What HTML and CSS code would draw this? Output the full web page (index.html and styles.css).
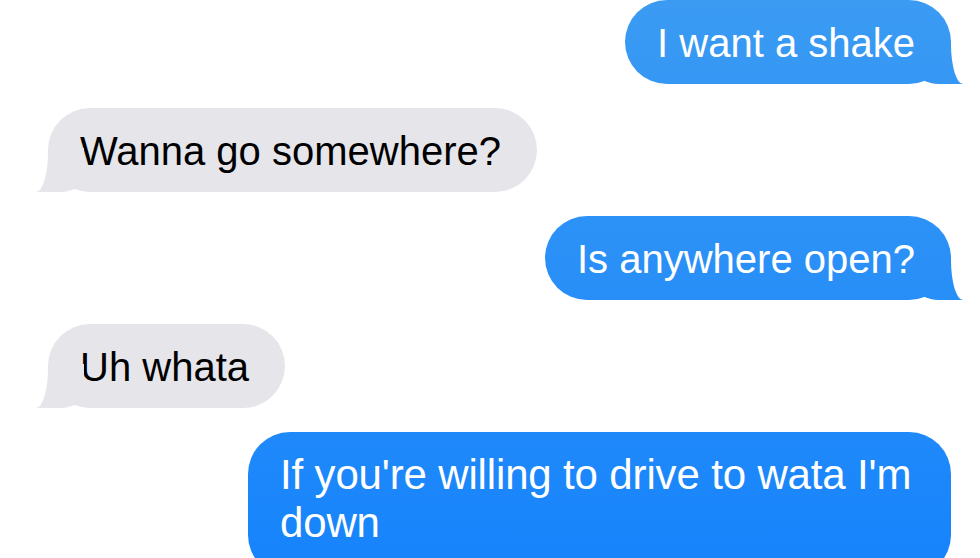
FILE: index.html
```html
<!DOCTYPE html>
<html lang="en">
<head>
  <meta charset="UTF-8">
  <meta name="viewport" content="width=device-width, initial-scale=1.0">
  <title>Messages</title>
  <link rel="stylesheet" href="styles.css">
</head>
<body>
  <div class="thread">
    <div class="bubble sent">I want a shake</div>
    <div class="bubble received">Wanna go somewhere?</div>
    <div class="bubble sent">Is anywhere open?</div>
    <div class="bubble received">Uh whata</div>
    <div class="bubble sent long">If you're willing to drive to wata I'm down</div>
  </div>
</body>
</html>
```

FILE: styles.css
```css
body {
  margin: 0;
  padding: 0;
  background: #fff;
  font-family: 'Liberation Sans', Arial, sans-serif;
  overflow: hidden;
}
.thread {
  display: flex;
  flex-direction: column;
  gap: 24px;
  padding: 0 29px 0 48px;
}
.bubble {
  position: relative;
  box-sizing: border-box;
  max-width: 703px;
  padding: 19px 36px 17px 32px;
  border-radius: 42px;
  font-size: 40px;
  line-height: 48px;
}
/* blue gets darker further down the screen, like the real app */
.sent {
  align-self: flex-end;
  color: #fff;
  background: linear-gradient(to bottom, #3b9bf3, #1784fc) fixed;
}
.received {
  align-self: flex-start;
  color: #000;
  background: #e5e5ea;
}
.long {
  font-size: 42px;
  letter-spacing: -0.15px;
  padding-bottom: 30px;
}
/* tails */
.bubble::before,
.bubble::after {
  content: "";
  position: absolute;
  bottom: 0;
  height: 44px;
}
.sent::before {
  right: -12px;
  width: 48px;
  background: linear-gradient(to bottom, #3b9bf3, #1784fc) fixed;
  border-bottom-left-radius: 24px 16px;
}
.sent::after {
  right: -40px;
  width: 40px;
  background: #fff;
  border-bottom-left-radius: 12px 40px;
}
.received::before {
  left: -12px;
  width: 48px;
  background: #e5e5ea;
  border-bottom-right-radius: 24px 16px;
}
.received::after {
  left: -40px;
  width: 40px;
  background: #fff;
  border-bottom-right-radius: 12px 40px;
}
.long::before,
.long::after {
  display: none;
}
```
